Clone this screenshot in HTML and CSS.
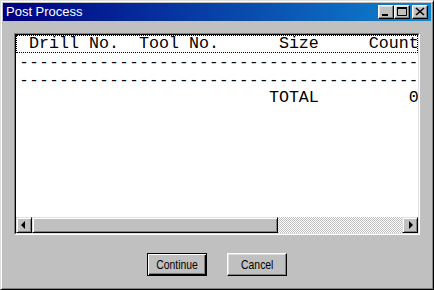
FILE: index.html
```html
<!DOCTYPE html>
<html>
<head>
<meta charset="utf-8">
<link rel="stylesheet" href="styles.css">
</head>
<body>
<div class="window">
  <div class="titlebar">
    <span class="title">Post Process</span>
    <div class="controls">
      <div class="cbtn"><svg width="14" height="12" viewBox="0 0 14 12"><rect x="3" y="8" width="6" height="2" fill="#000"/></svg></div>
      <div class="cbtn"><svg width="14" height="12" viewBox="0 0 14 12"><path d="M2.5 1.5h9v8h-9z" fill="none" stroke="#000"/><rect x="2" y="1" width="10" height="2" fill="#000"/></svg></div>
      <div class="cbtn close"><svg width="14" height="12" viewBox="0 0 14 12"><path d="M3 2l8 7M11 2l-8 7" stroke="#000" stroke-width="1.6" fill="none"/></svg></div>
    </div>
  </div>
  <div class="body">
    <div class="listbox">
      <div class="rows">
        <div class="row header"> Drill No.  Tool No.      Size     Count</div>
        <div class="row dash">----------------------------------------</div>
        <div class="row dash">----------------------------------------</div>
        <div class="row">                         TOTAL         0</div>
      </div>
      <div class="hscroll">
        <div class="sbtn"><svg width="14" height="14" viewBox="0 0 14 14"><path d="M4 7l4-4v8z" fill="#000"/></svg></div>
        <div class="thumb"></div>
        <div class="track"></div>
        <div class="sbtn"><svg width="14" height="14" viewBox="0 0 14 14"><path d="M10 7l-4-4v8z" fill="#000"/></svg></div>
      </div>
    </div>
    <div class="buttons">
      <div class="btn default"><span>Continue</span></div>
      <div class="btn"><span>Cancel</span></div>
    </div>
  </div>
</div>
</body>
</html>
```
FILE: styles.css
```css
html, body {
  margin: 0;
  padding: 0;
  background: #c0c0c0;
}
.window {
  width: 434px;
  height: 290px;
  box-sizing: border-box;
  background: #c0c0c0;
  border: 1px solid;
  border-color: #dfdfdf #000 #000 #dfdfdf;
  box-shadow: inset 1px 1px #fff, inset -1px -1px #808080;
  padding: 2px;
  display: flex;
  flex-direction: column;
}
.titlebar {
  height: 18px;
  flex: none;
  background: linear-gradient(to right, #000080, #1084d0);
  display: flex;
  align-items: center;
  justify-content: space-between;
  padding: 0 3px 0 3px;
}
.title {
  color: #fff;
  font-family: "Liberation Sans", Arial, sans-serif;
  font-size: 13px;
  line-height: 18px;
}
.controls {
  display: flex;
  align-items: center;
}
.cbtn {
  width: 16px;
  height: 14px;
  box-sizing: border-box;
  background: #c0c0c0;
  border: 1px solid;
  border-color: #fff #000 #000 #fff;
  box-shadow: inset -1px -1px #808080, inset 1px 1px #dfdfdf;
  display: flex;
  align-items: center;
  justify-content: center;
}
.cbtn svg { display: block; }
.cbtn.close { margin-left: 2px; }
.body {
  flex: 1;
  display: flex;
  flex-direction: column;
  padding: 12px 11px 11px 11px;
}
.listbox {
  height: 202px;
  box-sizing: border-box;
  border: 1px solid;
  border-color: #808080 #fff #fff #808080;
  padding: 1px;
  background: #fff;
  position: relative;
  display: flex;
  flex-direction: column;
}
.listbox::before {
  content: "";
  position: absolute;
  inset: 0;
  border: 1px solid;
  border-color: #000 #dfdfdf #dfdfdf #000;
  pointer-events: none;
}
.rows {
  flex: 1;
  overflow: hidden;
  font-family: "Liberation Mono", "Courier New", monospace;
  font-size: 16.67px;
  color: #000;
}
.row {
  white-space: pre;
  line-height: 18px;
  height: 18px;
  padding-left: 3px;
}
.row.dash {
  font-family: "DejaVu Sans Mono", "Liberation Mono", monospace;
  font-size: 16.6px;
}
.row.header {
  box-sizing: border-box;
  border: 1px dotted #000;
  line-height: 16px;
  padding-left: 2px;
  overflow: hidden;
}
.hscroll {
  height: 16px;
  flex: none;
  display: flex;
}
.sbtn, .thumb {
  box-sizing: border-box;
  height: 16px;
  background: #c0c0c0;
  border: 1px solid;
  border-color: #dfdfdf #000 #000 #dfdfdf;
  box-shadow: inset 1px 1px #fff, inset -1px -1px #808080;
}
.sbtn {
  width: 16px;
  flex: none;
  display: flex;
  align-items: center;
  justify-content: center;
}
.sbtn svg { display: block; }
.thumb {
  width: 246px;
  flex: none;
}
.track {
  flex: 1;
  background: repeating-conic-gradient(#c0c0c0 0 25%, #fff 0 50%) 0 0 / 2px 2px;
}
.buttons {
  margin-top: 18px;
  display: flex;
  justify-content: center;
  gap: 20px;
}
.btn {
  width: 60px;
  height: 23px;
  box-sizing: border-box;
  background: #c0c0c0;
  border: 1px solid;
  border-color: #fff #000 #000 #fff;
  box-shadow: inset -1px -1px #808080, inset 1px 1px #dfdfdf;
  display: flex;
  align-items: center;
  justify-content: center;
  font-family: "Liberation Sans", Arial, sans-serif;
  font-size: 13px;
  color: #000;
}
.btn span {
  display: inline-block;
  transform: scaleX(0.8);
}
.btn.default {
  border-color: #000;
  box-shadow: inset 1px 1px #fff, inset -1px -1px #000, inset -2px -2px #808080;
}
```
